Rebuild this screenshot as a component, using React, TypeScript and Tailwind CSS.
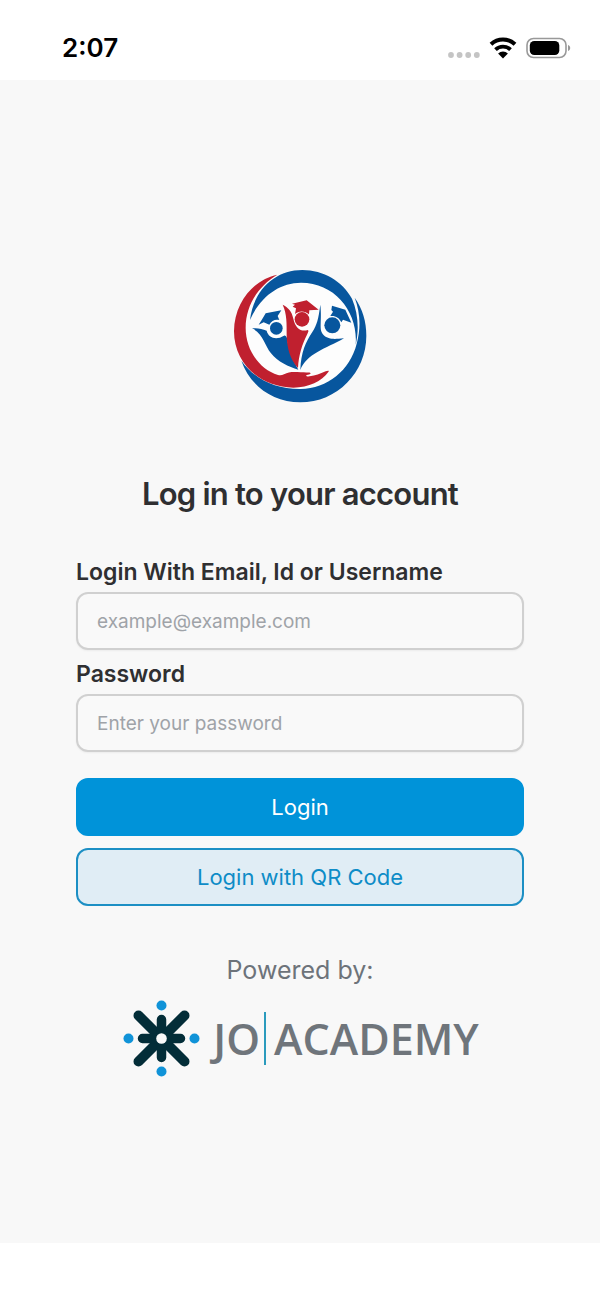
import { useState } from 'react'
import type { FormEvent, ReactNode } from 'react'

const fontStack = "font-['Inter',sans-serif]"

function StatusBar() {
  return (
    <header className="flex h-20 items-center justify-between bg-white pr-[29px] pl-[62px] pt-4">
      <span className="text-[26px] leading-8 font-semibold text-black">2:07</span>
      <div className="flex items-center gap-2">
        <svg width="34" height="24" viewBox="0 0 34 24" fill="#c4c4c4" aria-hidden="true">
          <circle cx="4" cy="19" r="2.9" />
          <circle cx="12.6" cy="19" r="2.9" />
          <circle cx="21.2" cy="19" r="2.9" />
          <circle cx="29.8" cy="19" r="2.9" />
        </svg>
        <svg width="28" height="24" viewBox="0 0 28 24" fill="none" stroke="#000" aria-hidden="true">
          <path d="M2 8.200a17.500 17.500 0 0 1 24 0" strokeWidth="4" />
          <path d="M6.500 13.700a10.800 10.800 0 0 1 15 0" strokeWidth="3.800" />
          <path d="M14 22.400l-4.900-4.900a7 7 0 0 1 9.800 0z" fill="#000" stroke="none" />
        </svg>
        <svg width="46" height="24" viewBox="0 0 46 24" aria-hidden="true">
          <rect x="2" y="2.500" width="39" height="19" rx="6.500" fill="none" stroke="#999" strokeWidth="1.600" />
          <rect x="4.800" y="5" width="29.500" height="14" rx="4.500" fill="#000" />
          <path d="M43 9v6c1.500-.5 2.200-1.700 2.200-3s-.7-2.500-2.200-3z" fill="#999" />
        </svg>
      </div>
    </header>
  )
}

function SchoolLogo() {
  return (
    <svg className="size-[150px]" viewBox="0 0 450 450" role="img" aria-label="School logo">
      <circle cx="226" cy="228" r="192" fill="#fdfdfd" />
      {/* Blue ring */}
      <g fill="#07569e">
        <path d="M75 180C86 88 152 30 232 30c64 0 120 34 149 86 18 42 22 92 11 138C400 158 332 68 228 68 162 68 104 112 75 180z" />
        <path d="M389 113c24 34 35 72 35 114 0 110-88 200-198 200-84 0-152-52-177-125 40 56 104 86 178 85 80-2 148-56 168-136 13-46 11-94-6-138z" />
      </g>
      {/* Hand */}
      <path
        d="M157 44C88 58 28 126 27 214c0 94 76 168 178 169 46 0 86-20 105-47 4-5-2-5-8-2-18 8-30 13-48 15-7 1-12-1-10-3 6-2 12-2 13-6 0-4-10-2-30-3-18-1-34-3-50 6-6 3-12 3-18 2C104 329 62 270 62 204c0-68 38-126 95-160z"
        fill="#c0202f"
      />
      {/* Figures */}
      <path d="M81 205c16-2 30 1 44 7 5 21 28 30 52 15 4-1 7 2 9 8 6 36 16 64 34 94-29-8-62-24-82-49-19-24-24-60-57-75z" fill="#07569e" />
      <path d="M173 134c16 8 28 20 32 42 6 30 24 40 43 34 4 2 2 6-1 12-16 32-26 64-28 102-24-26-33-60-34-96 0-38 1-66-12-94z" fill="#c0202f" />
      <path d="M286 134c-6 44-10 60-24 82-20 30-34 60-36 114 18-48 76-64 131-95-24 2-34 3-46-1-16-4-24-16-24-32 0-20 2-40-1-68z" fill="#07569e" />
      <circle cx="154" cy="205" r="19" fill="#07569e" />
      <circle cx="231" cy="178" r="22" fill="#c0202f" />
      <circle cx="322" cy="196" r="24" fill="#07569e" />
      {/* Caps */}
      <path d="M122 160l47-9-11 17 5 12c-13-3-23 2-30 14l-17-7-15 7 9-14z" fill="#07569e" />
      <path d="M201 131l44-10 36 28-28 2-1 12c-11-11-31-12-42-1l3-17-10-5 7-6z" fill="#c0202f" />
      <path d="M321 137l40 12 18 39-25-9-5 8c-6-14-18-21-33-19l8-13-5-5z" fill="#07569e" />
    </svg>
  )
}

function JoAcademyLogo() {
  return (
    <div className="flex items-center text-[43px] leading-none text-[#6f757b] font-['Open_Sans',sans-serif] font-semibold">
      <svg className="size-20" viewBox="0 0 80 80" aria-hidden="true">
        <g stroke="#032d38" strokeLinecap="round">
          <path d="M17.500 17.500l46 46M63.500 17.500l-46 46" strokeWidth="10" />
          <path d="M40.500 21.500v38M21.500 40.500h38" strokeWidth="9.500" />
        </g>
        <circle cx="40.500" cy="40.500" r="5.300" fill="#f9f9f9" />
        <g fill="#1093d8">
          <circle cx="40.500" cy="7.500" r="5" />
          <circle cx="40.500" cy="73.500" r="5" />
          <circle cx="7.500" cy="40.500" r="5" />
          <circle cx="73.500" cy="40.500" r="5" />
        </g>
      </svg>
      <span className="ml-3">JO</span>
      <span className="mr-2 ml-1 h-[53px] w-0.5 bg-[#2b9bbd]" />
      <span>ACADEMY</span>
    </div>
  )
}

interface FieldProps {
  id: string
  label: string
  type: string
  placeholder: string
  value: string
  onChange: (value: string) => void
}

function Field({ id, label, type, placeholder, value, onChange }: FieldProps) {
  return (
    <div>
      <label htmlFor={id} className="block text-[23px] leading-8 font-semibold text-[#2f2f31]">
        {label}
      </label>
      <input
        id={id}
        type={type}
        placeholder={placeholder}
        value={value}
        onChange={(e) => onChange(e.target.value)}
        className="mt-1 block h-[58px] w-full rounded-xl border-2 border-[#d0d0d0] bg-[#f9f9f9] px-[19px] text-[19px] text-gray-800 shadow-xs outline-none placeholder:text-[#9fa3a8] focus:border-[#0093d9]"
      />
    </div>
  )
}

function Button({ type, className, children }: { type: 'submit' | 'button'; className: string; children: ReactNode }) {
  return (
    <button type={type} className={`h-[58px] w-full rounded-xl border-2 text-[22px] ${className}`}>
      {children}
    </button>
  )
}

export default function App() {
  const [username, setUsername] = useState('')
  const [password, setPassword] = useState('')

  const handleSubmit = (e: FormEvent) => {
    e.preventDefault()
  }

  return (
    <div className={`flex min-h-screen flex-col bg-white ${fontStack}`}>
      <StatusBar />

      <main className="mb-14 flex flex-1 flex-col items-center bg-[#f8f8f8] px-6 pt-[180px]">
        <SchoolLogo />

        <h1 className="mt-16 text-[31px] leading-10 font-semibold tracking-tight text-[#2f2f31]">
          Log in to your account
        </h1>

        <form onSubmit={handleSubmit} className="mt-[42px] w-full max-w-md">
          <div className="space-y-2">
            <Field
              id="username"
              label="Login With Email, Id or Username"
              type="text"
              placeholder="example@example.com"
              value={username}
              onChange={setUsername}
            />
            <Field
              id="password"
              label="Password"
              type="password"
              placeholder="Enter your password"
              value={password}
              onChange={setPassword}
            />
          </div>

          <div className="mt-[26px] space-y-3">
            <Button type="submit" className="border-[#0093d9] bg-[#0093d9] text-white">
              Login
            </Button>
            <Button type="button" className="border-[#1c8fc4] bg-[#e0edf5] text-[#0e8cc7]">
              Login with QR Code
            </Button>
          </div>
        </form>

        <p className="mt-12 mb-3 text-[25px] leading-8 text-[#6d737a]">Powered by:</p>
        <JoAcademyLogo />
      </main>
    </div>
  )
}
